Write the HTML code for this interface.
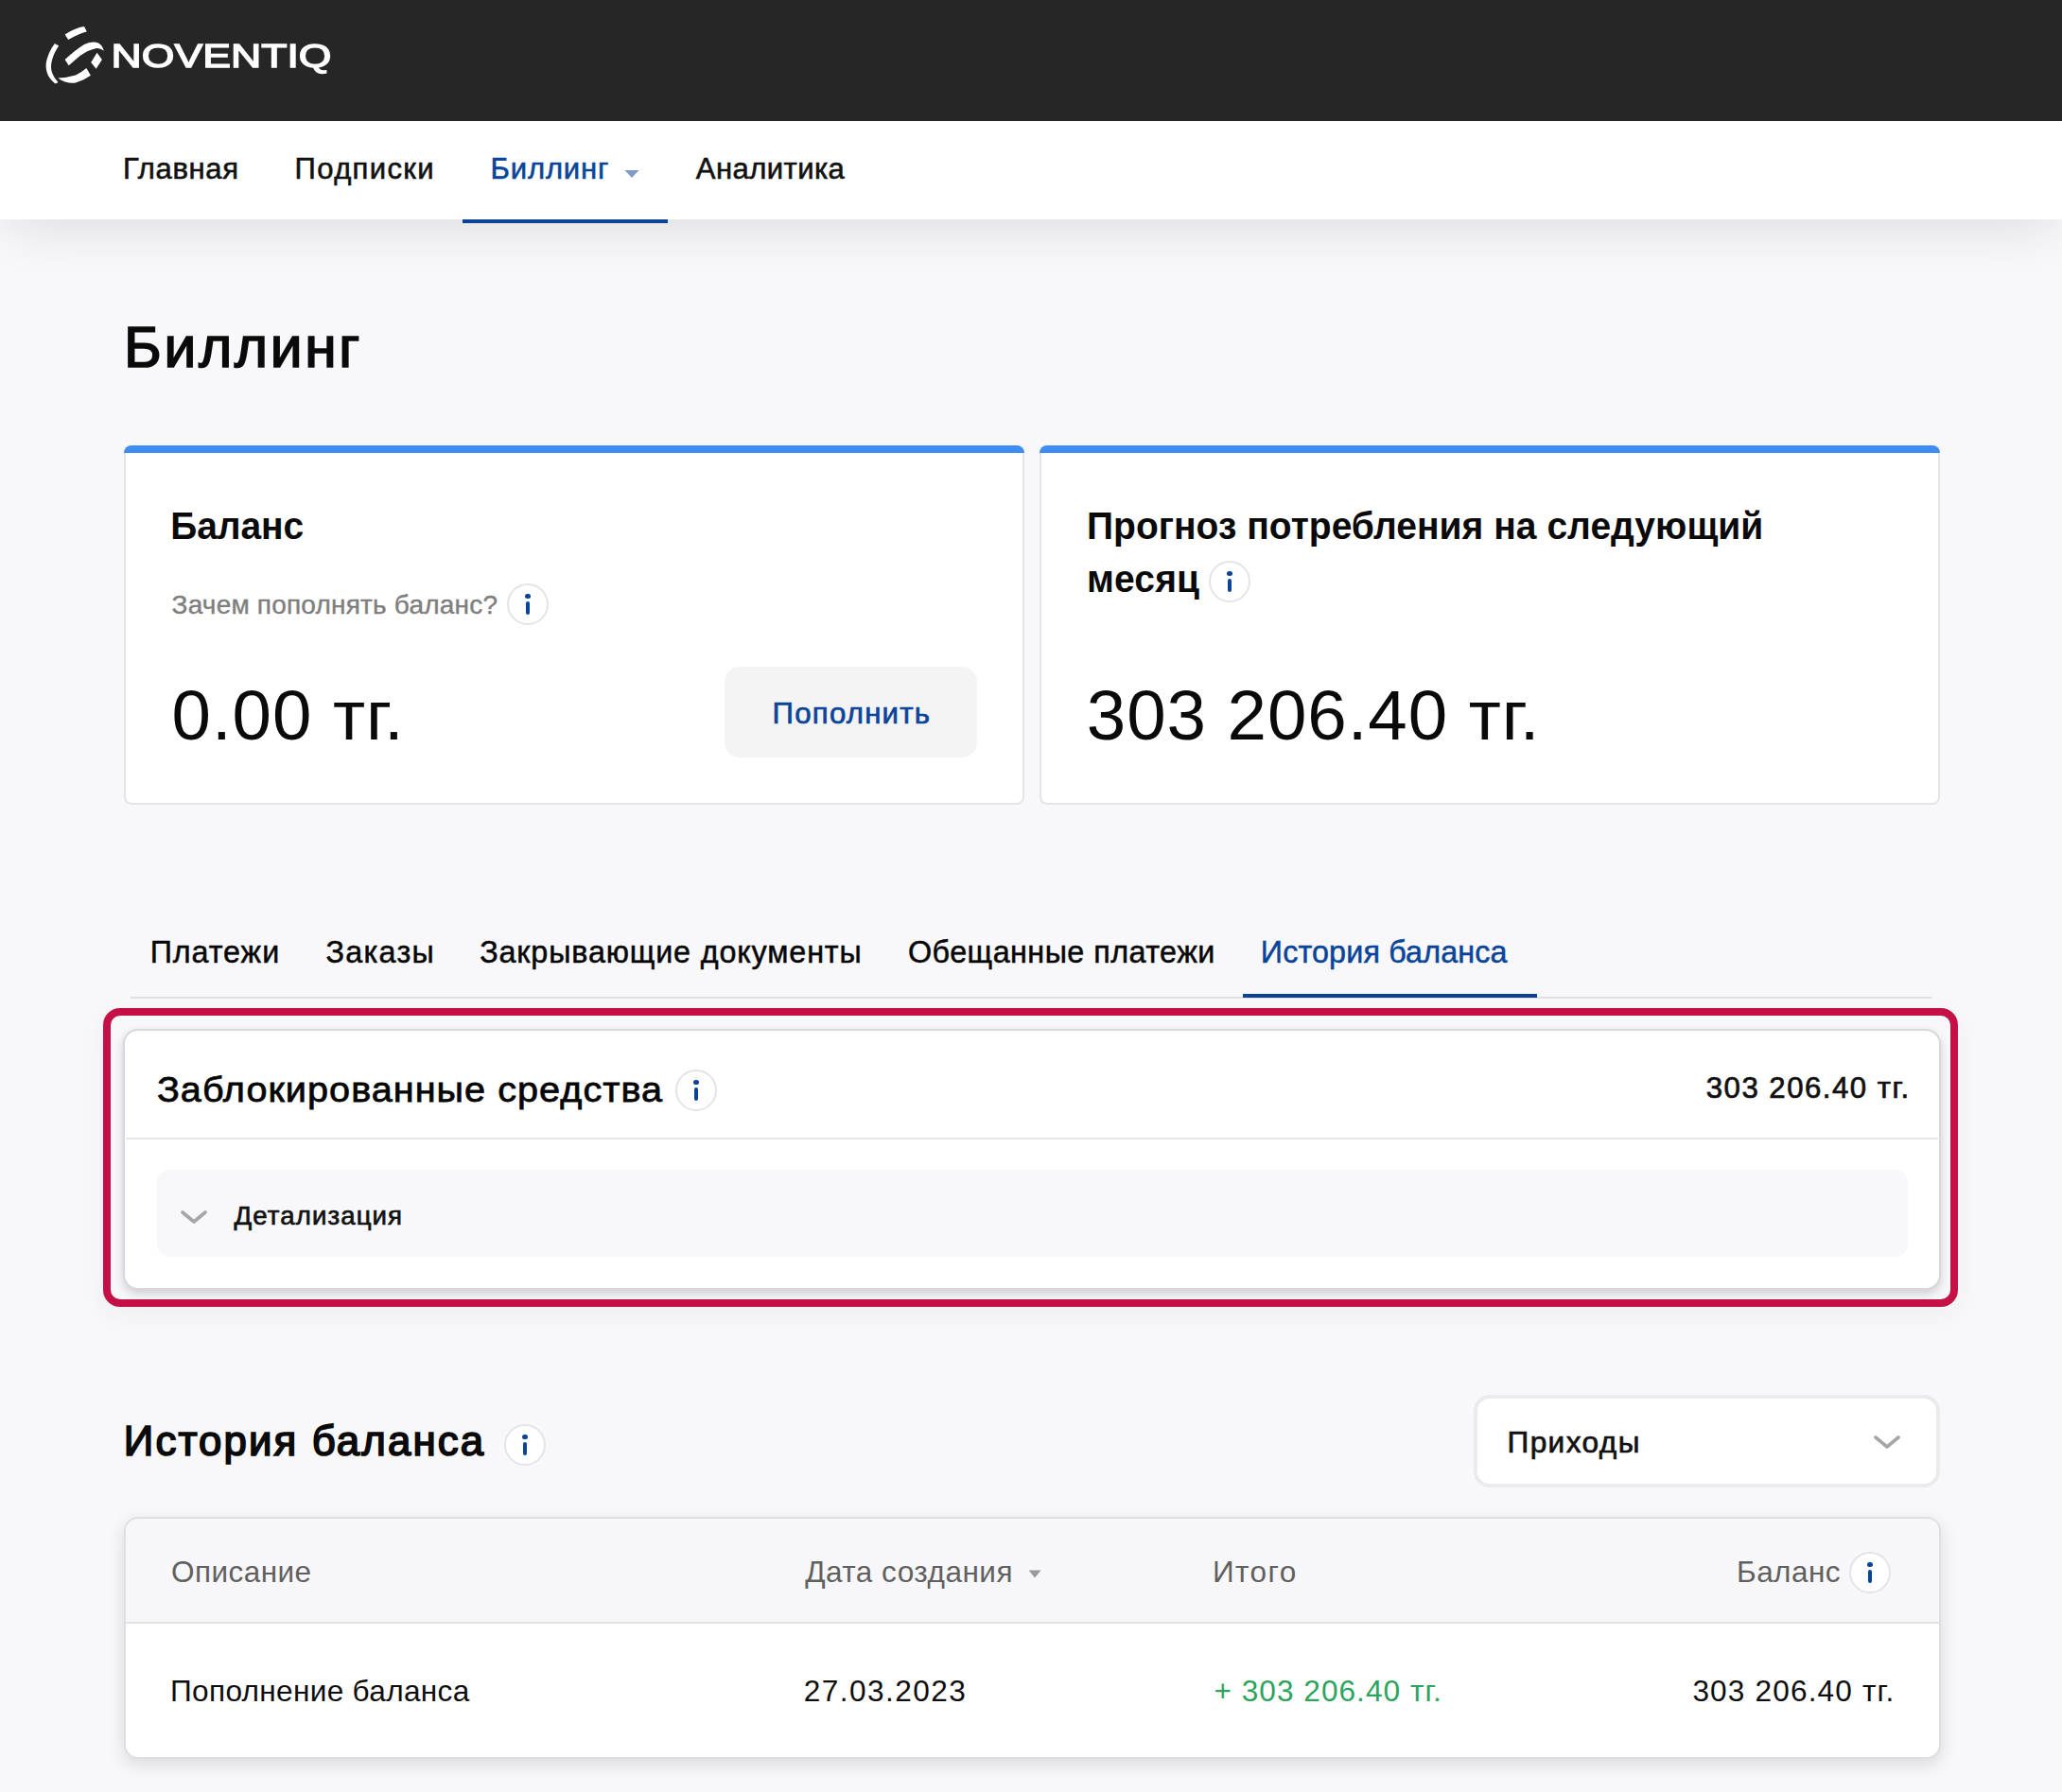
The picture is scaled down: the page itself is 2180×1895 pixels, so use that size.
<!DOCTYPE html>
<html lang="ru">
<head>
<meta charset="utf-8">
<title>Биллинг</title>
<style>
*{box-sizing:border-box;margin:0;padding:0}
html,body{width:2180px;height:1895px;overflow:hidden;background:#f8f8fa}
body{font-family:"Liberation Sans",sans-serif;position:relative}
.abs{position:absolute}
.t{position:absolute;white-space:pre;line-height:1.2}
#topbar{left:0;top:0;width:2180px;height:128px;background:#262626}
#nav{left:0;top:128px;width:2180px;height:104px;background:#fff}
#navsh{left:8px;top:150px;width:2164px;height:82px;box-shadow:0 5px 60px rgba(20,20,30,.135)}
#navline{left:489px;top:232px;width:217px;height:4px;background:#0a4499}
.card{background:#fff;border:2px solid #e4e4e8;border-radius:8px}
.bluebar{height:8px;background:#3f8cf3;border-radius:8px 8px 0 0}
.info{position:absolute;width:44px;height:44px;border-radius:50%;border:2px solid #e4e4e8;background:#fff}
.info i{position:absolute;left:18px;top:16.6px;width:4.1px;height:14.2px;border-radius:2px;background:#0a4499}
.info b{position:absolute;left:17.3px;top:8.8px;width:5.5px;height:5.5px;border-radius:50%;background:#0a4499}
</style>
</head>
<body>
<div class="abs" id="navsh"></div>
<div class="abs" id="nav"></div>
<div class="abs" id="topbar"></div>
<div class="abs" id="navline"></div>

<!-- logo -->
<svg class="abs" style="left:0;top:0;will-change:transform" width="400" height="127" viewBox="0 0 400 127">
 <g fill="#fff">
  <path d="M68.6 36.5 Q79 29.5 89 28 L91.8 33.4 Q83 35.5 72.2 42 Z"/>
  <path d="M57.9 46.1 C53.3 52 48.9 62 48.6 69.1 C48.4 76.5 52 84.3 58.6 88.4 L61.5 87 C57.6 83 54.2 77 54 71.3 C53.9 64 57.6 55 62.2 48.6 Z"/>
  <path d="M68.6 63 Q80 52.5 89 47 Q98 43 104 45.5 Q108.5 48 109.8 53.8 Q106 50.5 101 51.2 Q93 53 84.6 59 L72.7 69.2 Z"/>
  <path d="M102.5 55.7 L107.9 62.9 L101.6 72.7 L96.2 66 Z"/>
  <path d="M61.2 82.6 Q71 82 80 79.4 Q87 76 91.3 72 L95.9 79.8 Q89 85 80 87.6 Q70 89 61.2 82.6 Z"/>
 </g>
 <text x="0" y="0" transform="translate(117.6 71.2) scale(1.274 1)" font-family="Liberation Sans, sans-serif" font-size="35" fill="#fff" stroke="#fff" stroke-width="1.4">NOVENTIQ</text>
</svg>

<!-- nav caret -->
<svg class="abs" style="left:660px;top:179px" width="16" height="10" viewBox="0 0 16 10"><path d="M0.5 1 L15.5 1 L8 9 Z" fill="#7f9cc9"/></svg>

<!-- cards -->
<div class="abs card" style="left:131px;top:471px;width:952px;height:380px"><div class="bluebar" style="margin:-2px -2px 0 -2px"></div></div>
<div class="abs card" style="left:1099px;top:471px;width:952px;height:380px"><div class="bluebar" style="margin:-2px -2px 0 -2px"></div></div>
<div class="abs" style="left:766px;top:705px;width:267px;height:96px;border-radius:16px;background:#f4f4f4"></div>
<div class="info" style="left:536px;top:617px"><b></b><i></i></div>
<div class="info" style="left:1278px;top:593px"><b></b><i></i></div>

<!-- tabs -->
<div class="abs" style="left:138px;top:1054px;width:1905px;height:2px;background:#e2e2e5"></div>
<div class="abs" style="left:1314px;top:1051px;width:311px;height:4px;background:#0a4499"></div>

<!-- highlighted blocked funds -->
<div class="abs" style="left:109px;top:1066px;width:1961px;height:316px;border:8px solid #c50f47;border-radius:18px;box-shadow:0 8px 30px rgba(60,30,45,.05)"></div>
<div class="abs" style="left:130px;top:1088px;width:1922px;height:275.5px;border:2px solid #d8d8dc;border-radius:16px;background:#fff;box-shadow:0 4px 10px rgba(40,45,60,.2)"></div>
<div class="abs" style="left:133px;top:1203px;width:1916px;height:2px;background:#e6e6ea"></div>
<div class="abs" style="left:165.5px;top:1237px;width:1851.5px;height:92px;border-radius:13px;background:#f8f8fa"></div>
<svg class="abs" style="left:188px;top:1276px" width="34" height="22" viewBox="0 0 34 22"><path d="M5 6 L17 16 L29 6" fill="none" stroke="#a6a6a6" stroke-width="3.6" stroke-linecap="round" stroke-linejoin="round"/></svg>
<div class="info" style="left:714px;top:1131px"><b></b><i></i></div>

<!-- history -->
<div class="info" style="left:533px;top:1506px"><b></b><i></i></div>
<div class="abs" style="left:1558px;top:1475px;width:493px;height:98px;border:4px solid #ebebee;border-radius:17px;background:#fff"></div>
<svg class="abs" style="left:1978px;top:1514px" width="34" height="22" viewBox="0 0 34 22"><path d="M5 6 L17 16 L29 6" fill="none" stroke="#a6a6a6" stroke-width="3.6" stroke-linecap="round" stroke-linejoin="round"/></svg>

<div class="abs" style="left:130.5px;top:1604px;width:1921px;height:255.5px;border:2.5px solid #dfdfe3;border-radius:15px;background:#fff;box-shadow:0 6px 18px rgba(40,45,60,.15);overflow:hidden">
 <div style="height:111px;background:#f7f7f9;border-bottom:2px solid #e2e2e6"></div>
</div>
<svg class="abs" style="left:1087px;top:1660px" width="14" height="9" viewBox="0 0 14 9"><path d="M0.5 0.5 L13.5 0.5 L7 8.5 Z" fill="#9a9a9a"/></svg>
<div class="info" style="left:1955px;top:1641px"><b></b><i></i></div>

<span class="t" id="n1" style="left:130.00px;top:159.56px;font-size:31px;font-weight:400;color:#111;letter-spacing:0.667px;-webkit-text-stroke:0.6px #111;">Главная</span>
<span class="t" id="n2" style="left:311.60px;top:159.56px;font-size:31px;font-weight:400;color:#111;letter-spacing:1.357px;-webkit-text-stroke:0.6px #111;">Подписки</span>
<span class="t" id="n3" style="left:518.50px;top:159.56px;font-size:31px;font-weight:400;color:#0a4499;letter-spacing:0.883px;-webkit-text-stroke:0.6px #0a4499;">Биллинг</span>
<span class="t" id="n4" style="left:735.80px;top:159.56px;font-size:31px;font-weight:400;color:#111;letter-spacing:0.450px;-webkit-text-stroke:0.6px #111;">Аналитика</span>
<span class="t" id="h1" style="left:131.10px;top:331.04px;font-size:60.5px;font-weight:400;color:#0a0a0a;letter-spacing:2.650px;-webkit-text-stroke:1.7px #0a0a0a;">Биллинг</span>
<span class="t" id="c1t" style="left:180.20px;top:534.09px;font-size:39px;font-weight:700;color:#0a0a0a;letter-spacing:-0.080px;transform:scaleY(1.055);transform-origin:0 36.91px;">Баланс</span>
<span class="t" id="c1q" style="left:181.60px;top:622.50px;font-size:28px;font-weight:400;color:#7e7e7e;letter-spacing:0.200px;-webkit-text-stroke:0.4px #7e7e7e;">Зачем пополнять баланс?</span>
<span class="t" id="c1v" style="left:181.50px;top:712.39px;font-size:74.5px;font-weight:400;color:#0a0a0a;letter-spacing:0.957px;">0.00 тг.</span>
<span class="t" id="c1b" style="left:816.60px;top:735.87px;font-size:31.2px;font-weight:400;color:#0a4499;letter-spacing:1.212px;-webkit-text-stroke:0.7px #0a4499;">Пополнить</span>
<span class="t" id="c2t1" style="left:1149.00px;top:534.09px;font-size:39px;font-weight:700;color:#0a0a0a;letter-spacing:0.026px;transform:scaleY(1.055);transform-origin:0 36.91px;">Прогноз потребления на следующий</span>
<span class="t" id="c2t2" style="left:1149.00px;top:589.79px;font-size:39px;font-weight:700;color:#0a0a0a;letter-spacing:0.150px;transform:scaleY(1.055);transform-origin:0 36.91px;">месяц</span>
<span class="t" id="c2v" style="left:1148.80px;top:712.39px;font-size:74.5px;font-weight:400;color:#0a0a0a;letter-spacing:0.938px;">303 206.40 тг.</span>
<span class="t" id="t1" style="left:158.70px;top:988.33px;font-size:32.3px;font-weight:400;color:#060606;letter-spacing:0.917px;-webkit-text-stroke:0.5px #060606;">Платежи</span>
<span class="t" id="t2" style="left:344.50px;top:988.33px;font-size:32.3px;font-weight:400;color:#060606;letter-spacing:1.260px;-webkit-text-stroke:0.5px #060606;">Заказы</span>
<span class="t" id="t3" style="left:507.20px;top:988.33px;font-size:32.3px;font-weight:400;color:#060606;letter-spacing:0.855px;-webkit-text-stroke:0.5px #060606;">Закрывающие документы</span>
<span class="t" id="t4" style="left:960.00px;top:988.33px;font-size:32.3px;font-weight:400;color:#060606;letter-spacing:0.463px;-webkit-text-stroke:0.5px #060606;">Обещанные платежи</span>
<span class="t" id="t5" style="left:1332.80px;top:988.33px;font-size:32.3px;font-weight:400;color:#0a4499;letter-spacing:0.143px;-webkit-text-stroke:0.5px #0a4499;">История баланса</span>
<span class="t" id="b1" style="left:165.90px;top:1128.32px;font-size:39.6px;font-weight:400;color:#050505;letter-spacing:1.048px;-webkit-text-stroke:0.8px #050505;transform:scaleY(0.95);transform-origin:0 37.48px;">Заблокированные средства</span>
<span class="t" id="b2" style="left:1803.80px;top:1131.97px;font-size:31.2px;font-weight:400;color:#111;letter-spacing:1.462px;-webkit-text-stroke:0.7px #111;">303 206.40 тг.</span>
<span class="t" id="b3" style="left:247.40px;top:1268.78px;font-size:27.6px;font-weight:400;color:#111;letter-spacing:1.120px;-webkit-text-stroke:0.7px #111;">Детализация</span>
<span class="t" id="hh" style="left:130.80px;top:1497.74px;font-size:43.8px;font-weight:400;color:#0a0a0a;letter-spacing:2.107px;-webkit-text-stroke:1.7px #0a0a0a;">История баланса</span>
<span class="t" id="sel" style="left:1593.50px;top:1507.09px;font-size:31.6px;font-weight:400;color:#111;letter-spacing:1.417px;-webkit-text-stroke:0.7px #111;">Приходы</span>
<span class="t" id="th1" style="left:181.10px;top:1644.19px;font-size:31.5px;font-weight:400;color:#606060;letter-spacing:0.443px;">Описание</span>
<span class="t" id="th2" style="left:851.20px;top:1644.19px;font-size:31.5px;font-weight:400;color:#606060;letter-spacing:0.483px;">Дата создания</span>
<span class="t" id="th3" style="left:1282.00px;top:1644.19px;font-size:31.5px;font-weight:400;color:#606060;letter-spacing:1.400px;">Итого</span>
<span class="t" id="th4" style="left:1836.00px;top:1644.19px;font-size:31.5px;font-weight:400;color:#606060;letter-spacing:0.460px;">Баланс</span>
<span class="t" id="r1" style="left:180.10px;top:1769.69px;font-size:31.6px;font-weight:400;color:#0d0d0d;letter-spacing:0.306px;">Пополнение баланса</span>
<span class="t" id="r2" style="left:849.70px;top:1769.69px;font-size:31.6px;font-weight:400;color:#0d0d0d;letter-spacing:1.456px;">27.03.2023</span>
<span class="t" id="r3" style="left:1283.50px;top:1769.69px;font-size:31.6px;font-weight:400;color:#2da45d;letter-spacing:1.020px;">+ 303 206.40 тг.</span>
<span class="t" id="r4" style="left:1789.40px;top:1769.69px;font-size:31.6px;font-weight:400;color:#0d0d0d;letter-spacing:1.154px;">303 206.40 тг.</span>
</body>
</html>
